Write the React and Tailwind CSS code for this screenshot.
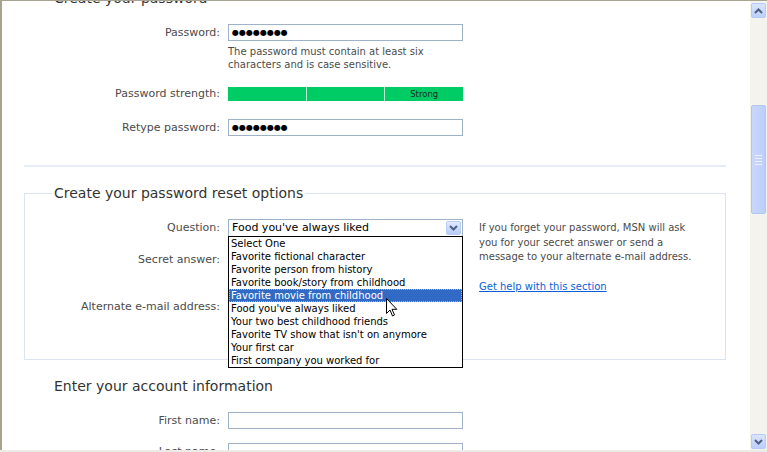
import React from "react";

const font = { fontFamily: '"DejaVu Sans", Verdana, sans-serif' };

const questions = [
  "Select One",
  "Favorite fictional character",
  "Favorite person from history",
  "Favorite book/story from childhood",
  "Favorite movie from childhood",
  "Food you've always liked",
  "Your two best childhood friends",
  "Favorite TV show that isn't on anymore",
  "Your first car",
  "First company you worked for",
];

const Label = ({ children }) => (
  <div className="text-right text-[11px] leading-[17px] text-[#4b4b4b]">{children}</div>
);

const TextBox = ({ value }) => (
  <div className="h-[17px] border border-[#9fb3c8] bg-white pl-[3px] text-[8px] leading-[15px] text-black">
    {value}
  </div>
);

const Chevron = ({ up }) => (
  <svg width="9" height="6" viewBox="0 0 9 6">
    <path
      d={up ? "M1 5 L4.5 1.5 L8 5" : "M1 1 L4.5 4.5 L8 1"}
      fill="none"
      stroke="#4d6185"
      strokeWidth="2"
    />
  </svg>
);

const Cursor = () => (
  <svg width="12" height="19" viewBox="0 0 12 19" className="absolute left-[157px] top-[61px]">
    <path
      d="M0.5 0.5 L0.5 15.5 L4 12 L6.5 18 L8.5 17 L6 11.3 L10.8 11.3 Z"
      fill="white"
      stroke="black"
      strokeWidth="1"
    />
  </svg>
);

const QuestionSelect = () => (
  <div className="relative">
    <div className="flex h-[18px] items-center border border-[#9fb3c8] bg-white">
      <span className="flex-1 pl-[3px] text-[11px] leading-[16px] text-black">Food you've always liked</span>
      <span className="m-px flex h-[14px] w-[15px] items-center justify-center rounded-[2px] border border-[#b9cbf3] bg-gradient-to-b from-[#e2eafe] to-[#b7cbf8]">
        <Chevron />
      </span>
    </div>
    <div className="absolute left-0 top-[17px] z-10 w-[235px] border border-black bg-white">
      {questions.map((q, i) => (
        <div
          key={q}
          className={
            i === 4
              ? "h-[13px] border border-dotted border-[#e8b04a] bg-[#316ac5] pl-px text-[10px] leading-[11px] text-white"
              : "h-[13px] pl-[2px] text-[10px] leading-[13px] text-black"
          }
        >
          {q}
        </div>
      ))}
      <Cursor />
    </div>
  </div>
);

export default function App() {
  return (
    <div className="flex h-[452px] w-[767px] flex-col overflow-hidden bg-white" style={font}>
      <div className="flex min-h-0 flex-1 border-t border-[#a7a592]">
        <div className="min-w-0 flex-1 overflow-hidden border-l-2 border-[#a7a592]">
          <div className="-mt-[12px] pl-[52px] text-[14px] leading-[18px] text-[#333]">Create your password</div>

          <div className="mt-[17px] grid grid-cols-[218px_235px] gap-x-2">
            <Label>Password:</Label>
            <TextBox value="●●●●●●●●" />
            <div />
            <div className="mt-[4px] text-[10px] leading-[13px] text-[#4b4b4b]">
              The password must contain at least six characters and is case sensitive.
            </div>
          </div>

          <div className="mt-[16px] grid grid-cols-[218px_235px] gap-x-2">
            <div className="text-right text-[11px] leading-[14px] text-[#4b4b4b]">Password strength:</div>
            <div className="flex h-[14px] bg-[#00cc66]">
              <div className="flex-1 border-r border-[#bfe9d2]" />
              <div className="flex-1 border-r border-[#bfe9d2]" />
              <div className="flex-1 text-center text-[8.5px] leading-[14px] text-[#1f2a22]">Strong</div>
            </div>
          </div>

          <div className="mt-[18px] grid grid-cols-[218px_235px] gap-x-2">
            <Label>Retype password:</Label>
            <TextBox value="●●●●●●●●" />
          </div>

          <div className="ml-[22px] mr-[24px] mt-[29px] h-[2px] bg-[#e6edf7]" />

          <div className="ml-[22px] mr-[24px] mt-[26px] h-[167px] border border-[#dbe4f1]">
            <div className="-mt-[10px] ml-[27px] w-fit bg-white px-[2px] text-[14px] leading-[18px] text-[#333]">
              Create your password reset options
            </div>
            <div className="mt-[17px] flex">
              <div className="grid w-[438px] grid-cols-[195px_235px] content-start gap-x-2">
                <Label>Question:</Label>
                <QuestionSelect />
                <div className="mt-[14px]">
                  <Label>Secret answer:</Label>
                </div>
                <div className="mt-[14px]">
                  <TextBox value="" />
                </div>
                <div className="mt-[30px]">
                  <Label>Alternate e-mail address:</Label>
                </div>
                <div className="mt-[30px]">
                  <TextBox value="" />
                </div>
              </div>
              <div className="ml-[16px] mt-[2px] w-[225px] text-[10px] leading-[14.5px] text-[#4b4b4b]">
                <p>If you forget your password, MSN will ask you for your secret answer or send a message to your alternate e-mail address.</p>
                <a href="#" className="mt-[15px] block text-[#0a5fd6] underline">
                  Get help with this section
                </a>
              </div>
            </div>
          </div>

          <div className="mt-[17px] pl-[52px] text-[14px] leading-[18px] text-[#333]">Enter your account information</div>

          <div className="mt-[17px] grid grid-cols-[218px_235px] gap-x-2">
            <Label>First name:</Label>
            <TextBox value="" />
          </div>
          <div className="mt-[14px] grid grid-cols-[218px_235px] gap-x-2">
            <Label>Last name:</Label>
            <TextBox value="" />
          </div>
        </div>

        <div className="flex w-[17px] flex-col bg-[#f4f3ee] pr-px pt-px">
          <div className="ml-px mt-px flex h-[15px] w-[15px] items-center justify-center rounded-[2px] border border-[#b7caf5] bg-gradient-to-b from-[#dbe5fd] to-[#bccffa]">
            <Chevron up />
          </div>
          <div className="ml-px mt-[87px] flex h-[109px] w-[15px] flex-col items-center justify-center gap-[2px] rounded-[2px] border border-[#b1c5f3] bg-gradient-to-r from-[#c9d7fd] to-[#bccefa]">
            <div className="h-px w-[7px] bg-[#eef3ff]" />
            <div className="h-px w-[7px] bg-[#eef3ff]" />
            <div className="h-px w-[7px] bg-[#eef3ff]" />
            <div className="h-px w-[7px] bg-[#eef3ff]" />
          </div>
          <div className="flex-1" />
          <div className="mb-px ml-px flex h-[15px] w-[15px] items-center justify-center rounded-[2px] border border-[#b7caf5] bg-gradient-to-b from-[#dbe5fd] to-[#bccffa]">
            <Chevron />
          </div>
        </div>
      </div>
      <div className="h-[2px] bg-[#ecebe5]" />
    </div>
  );
}
